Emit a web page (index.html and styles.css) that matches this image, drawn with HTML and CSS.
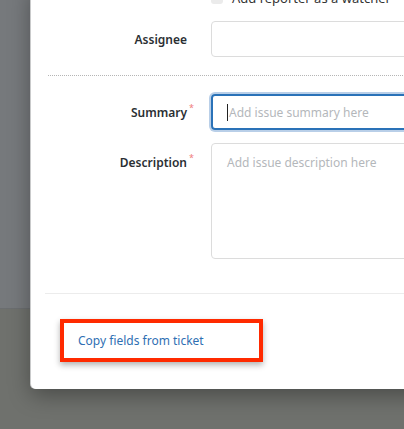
FILE: index.html
```html
<!DOCTYPE html>
<html>
<head>
<meta charset="utf-8">
<link rel="stylesheet" href="styles.css">
</head>
<body>
<div class="page">
  <div class="backdrop-top"></div>
  <div class="modal">
    <div class="form">
      <div class="row row-check">
        <div class="label"></div>
        <label class="check"><span class="box"></span><span>Add reporter as a watcher</span></label>
      </div>
      <div class="row row-assignee">
        <div class="label">Assignee</div>
        <div class="input"></div>
      </div>
      <div class="dotted"></div>
      <div class="row row-summary">
        <div class="label"><span class="req">Summary</span></div>
        <div class="input focus"><span class="caret"></span><span class="ph">Add issue summary here</span></div>
      </div>
      <div class="row row-desc">
        <div class="label top"><span class="req">Description</span></div>
        <div class="input area"><span class="ph">Add issue description here</span></div>
      </div>
    </div>
    <div class="sep"></div>
    <div class="footer">
      <div class="highlight"><a class="link">Copy fields from ticket</a></div>
    </div>
  </div>
</div>
</body>
</html>
```
FILE: styles.css
```css
html, body {
  margin: 0;
  padding: 0;
}
body {
  width: 404px;
  height: 429px;
  overflow: hidden;
  background: #6f716d;
  font-family: "Noto Sans", "Open Sans", sans-serif;
  font-size: 12px;
  color: #333;
}
.page {
  position: relative;
  width: 404px;
  height: 429px;
}
.backdrop-top {
  height: 308px;
  background: #76797c;
  border-bottom: 1px solid #6b6e70;
}
.modal {
  position: absolute;
  left: 31px;
  top: -14px;
  width: 440px;
  height: 403px;
  background: #fff;
  border-radius: 0 0 0 5px;
  box-shadow: -1px 0 0 #c9cacb, 0 6px 22px rgba(0, 0, 0, 0.35);
  overflow: hidden;
}
.form {
  padding-left: 17px;
}
.row {
  display: grid;
  grid-template-columns: 139px 1fr;
  column-gap: 24px;
  align-items: center;
}
.label {
  text-align: right;
  font-weight: 600;
  color: #2b2f33;
  font-size: 12px;
}
.label.top {
  align-self: start;
  padding-top: 11px;
}
.req {
  position: relative;
}
.req::after {
  content: "*";
  position: absolute;
  left: 100%;
  top: -3px;
  margin-left: 2px;
  color: #f07c7c;
  font-weight: 400;
  font-size: 9px;
}
.row-check {
  height: 16px;
  margin-top: 4px;
}
.check {
  display: flex;
  align-items: center;
  gap: 9px;
  font-size: 13px;
  color: #333;
  line-height: 16px;
  margin-top: 0;
}
.box {
  width: 12px;
  height: 12px;
  border-radius: 3px;
  background: #ebebeb;
  flex: none;
}
.row-assignee {
  margin-top: 15px;
}
.input {
  height: 34px;
  border: 1px solid #dcdcdc;
  border-radius: 4px;
  box-sizing: content-box;
  display: flex;
  align-items: center;
  padding-left: 15px;
}
.dotted {
  margin-top: 18px;
  border-top: 1px dotted #b5b5b5;
}
.row-summary {
  margin-top: 18px;
}
.input.focus {
  border: 2px solid #2a72b8;
  height: 32px;
  padding-left: 14px;
  box-shadow: 0 0 0 2px #b9cfe8;
}
.caret {
  width: 1px;
  height: 17px;
  background: #222;
  margin-right: 1px;
}
.ph {
  color: #b4b7bb;
  font-size: 12px;
}
.row-desc {
  margin-top: 13px;
}
.input.area {
  height: 104px;
  align-items: flex-start;
  padding-top: 10px;
}
.sep {
  margin-top: 34px;
  margin-left: 14px;
  border-top: 1px solid #ececec;
}
.footer {
  padding: 25px 0 0 29px;
}
.highlight {
  height: 35px;
  border: 4px solid #ff2a00;
  display: flex;
  align-items: center;
  padding-left: 14px;
  box-sizing: content-box;
  width: 181px;
  box-shadow: 0 3px 6px rgba(0, 0, 0, 0.3);
}
.link {
  color: #2f6fb3;
  font-size: 12px;
  text-decoration: none;
}
```
